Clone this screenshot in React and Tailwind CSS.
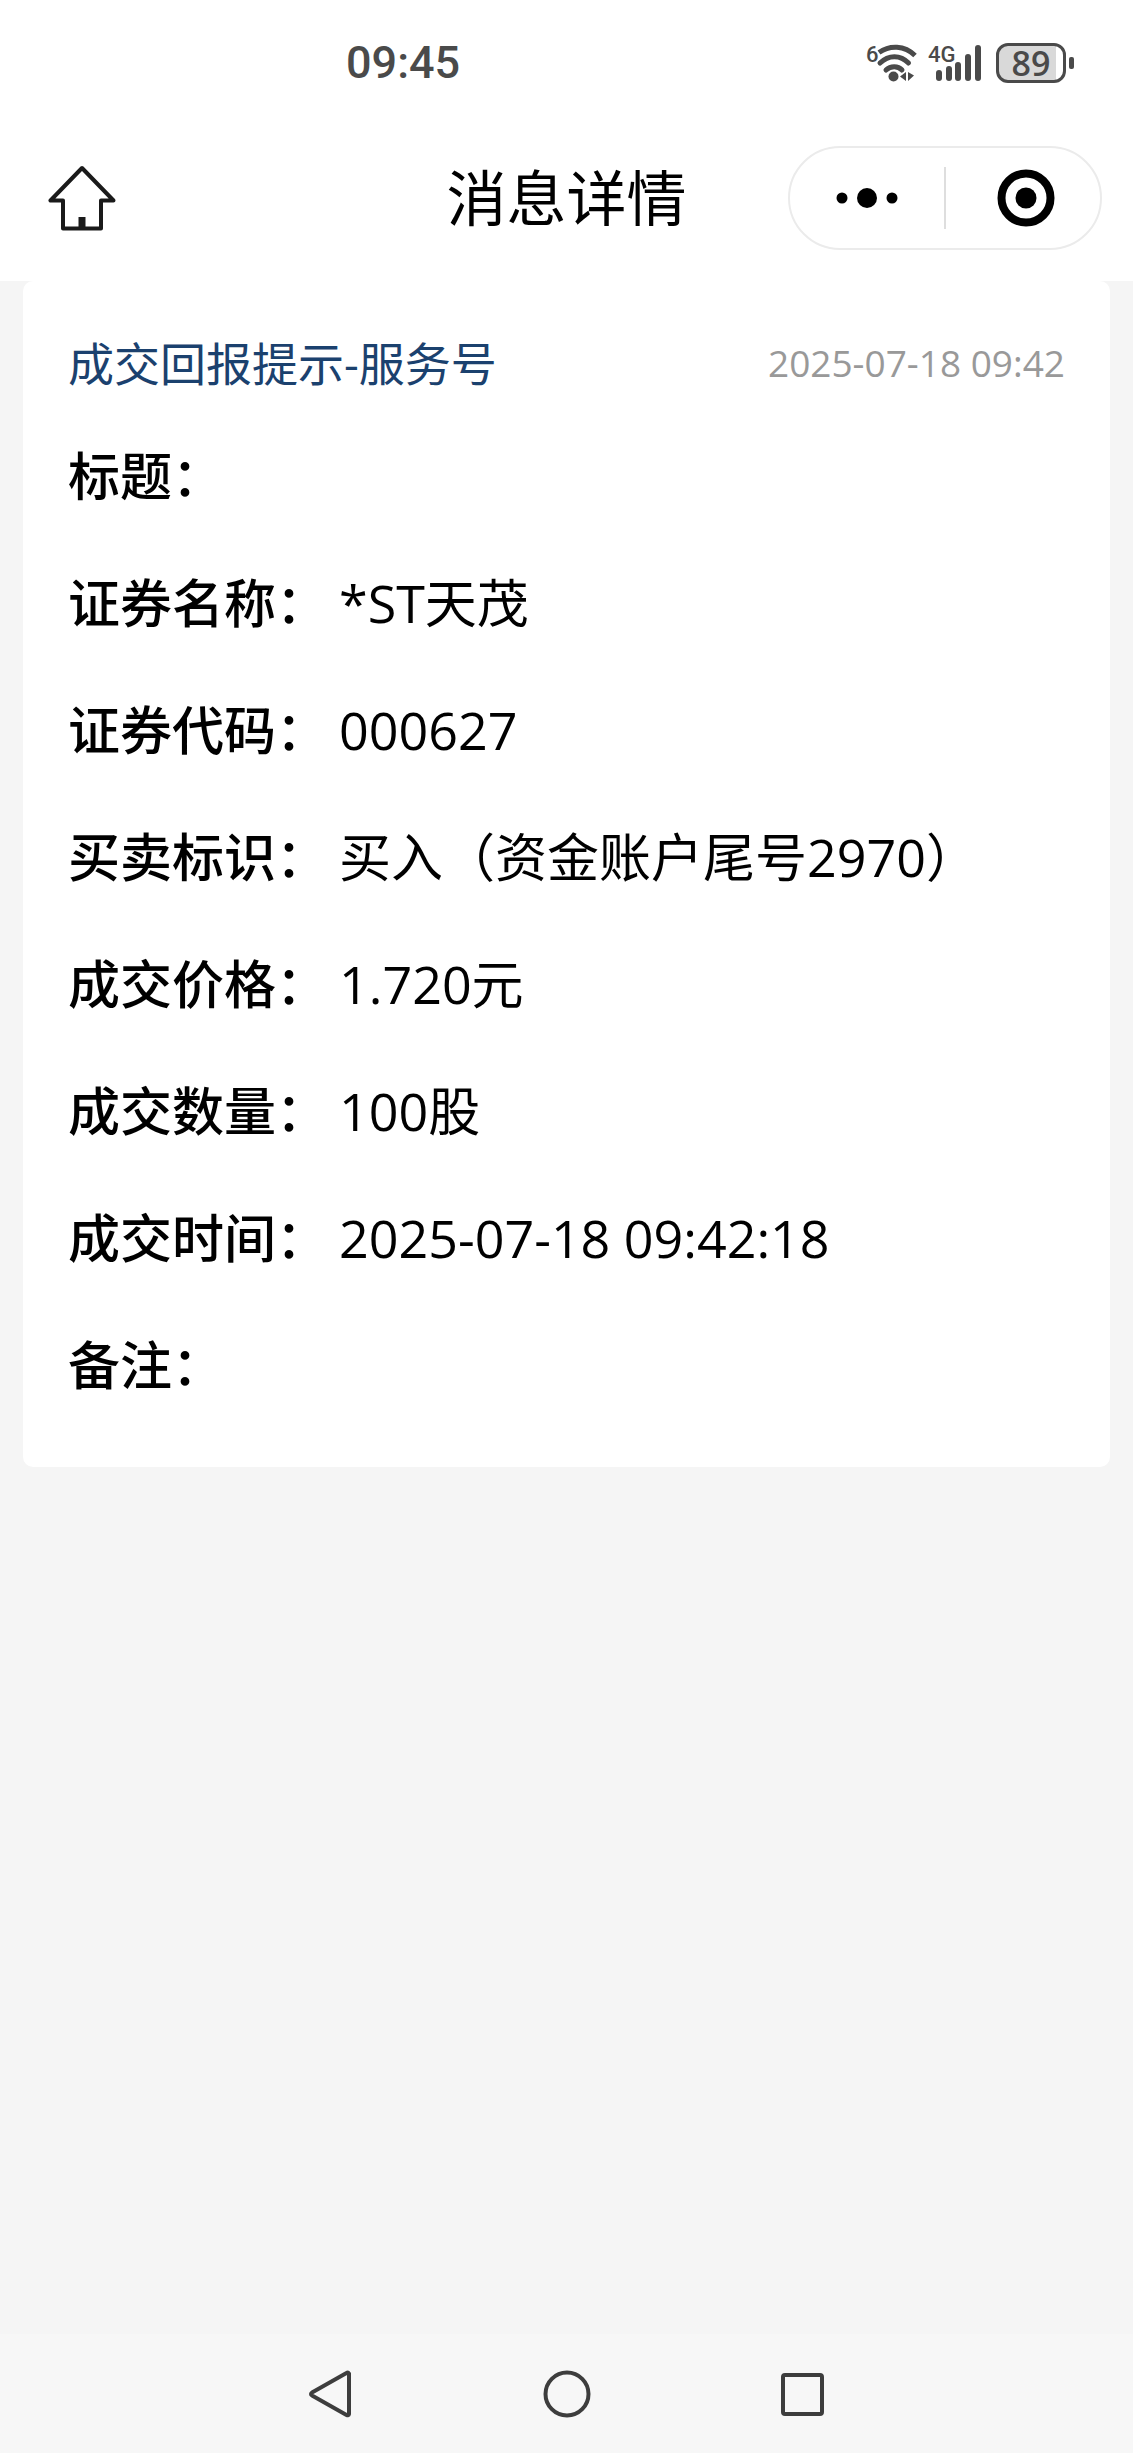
const rows = [
  { label: "标题" },
  { label: "证券名称", value: "*ST天茂" },
  { label: "证券代码", value: "000627" },
  { label: "买卖标识", value: "买入（资金账户尾号2970）" },
  { label: "成交价格", value: "1.720元" },
  { label: "成交数量", value: "100股" },
  { label: "成交时间", value: "2025-07-18 09:42:18" },
  { label: "备注" },
];

function WifiIcon() {
  return (
    <svg className="overflow-visible" width="52" height="40" viewBox="0 0 52 40" fill="none" stroke="#4a4a4a" strokeWidth="5">
      <text x="0" y="19" fill="#4a4a4a" stroke="none" fontSize="22" fontWeight="500" fontFamily="Roboto, sans-serif">6</text>
      <path d="M13 9.500C23.500 2 38.500 2 49 12.500" />
      <path strokeLinecap="round" d="M14 20C22.500 11.500 34.500 11.500 42.500 20" />
      <path strokeLinecap="round" d="M20 27C24.500 22.500 32 22.500 36 27" />
      <circle cx="27.500" cy="33.500" r="5" fill="#4a4a4a" stroke="none" />
      <path d="M40 29v9l-6-4.500zM42 29v9l6-5.500z" fill="#4a4a4a" stroke="none" />
    </svg>
  );
}

function SignalIcon() {
  return (
    <svg className="overflow-visible" width="54" height="40" viewBox="0 0 54 40" fill="#4a4a4a">
      <text x="0" y="19" fontSize="22" fontWeight="500" fontFamily="Roboto, sans-serif">4G</text>
      <rect x="8" y="27" width="6" height="11" rx="3" />
      <rect x="18" y="23" width="6" height="15" rx="3" />
      <rect x="27" y="19" width="6" height="19" rx="3" />
      <rect x="37" y="11" width="6" height="27" rx="3" />
      <rect x="47" y="2" width="6" height="36" rx="3" />
    </svg>
  );
}

function StatusBar() {
  return (
    <div className="flex h-[126px] items-center justify-between pl-[346px] pr-[59px] text-[#4a4a4a]">
      <span className="font-['Roboto',sans-serif] text-[45px] font-medium leading-[60px]">09:45</span>
      <div className="flex items-center">
        <WifiIcon />
        <span className="ml-[10px]"><SignalIcon /></span>
        <div className="ml-[14px] flex items-center gap-[3px]">
          <div className="flex h-[40px] w-[70px] items-center justify-center rounded-[12px] border-[3px] border-[#4a4a4a] bg-[linear-gradient(to_right,#d9d9d9_89%,#fff_89%)] text-[34px] font-semibold leading-none">
            89
          </div>
          <span className="h-[12px] w-[5px] rounded-[2px] bg-[#4a4a4a]" />
        </div>
      </div>
    </div>
  );
}

function TitleBar() {
  return (
    <header className="grid h-[155px] grid-cols-[1fr_auto_1fr] items-center px-[31px] pb-[11px]">
      <button type="button" aria-label="首页" className="justify-self-start pl-[17px]">
        <svg width="68" height="66" viewBox="0 0 68 66" fill="none" stroke="#1a1a1a" strokeWidth="4" strokeLinejoin="round">
          <path d="M34 3L2.500 35.500H15V63.500H53V35.500H65.500Z" />
          <path d="M34 52v11" strokeWidth="7" />
        </svg>
      </button>
      <h1 className="text-[60px] leading-[80px]">消息详情</h1>
      <div className="flex h-[104px] w-[314px] items-center justify-self-end rounded-full border-2 border-[#ebebeb]">
        <button type="button" aria-label="更多" className="flex w-[154px] justify-center">
          <svg width="62" height="20" viewBox="0 0 62 20">
            <circle cx="6" cy="10" r="5.500" />
            <circle cx="31" cy="10" r="10" />
            <circle cx="56" cy="10" r="5.500" />
          </svg>
        </button>
        <span className="h-[62px] w-[2px] bg-[#dedede]" />
        <button type="button" aria-label="关闭" className="flex flex-1 justify-center pl-[6px]">
          <svg width="58" height="58" viewBox="0 0 58 58">
            <circle cx="29" cy="29" r="24.500" fill="none" stroke="#000" strokeWidth="8" />
            <circle cx="29" cy="29" r="10.500" />
          </svg>
        </button>
      </div>
    </header>
  );
}

function NavBar() {
  return (
    <nav className="flex h-[119px] items-center justify-center gap-[188px] bg-[#f7f7f7]">
      <button type="button" aria-label="返回">
        <svg width="48" height="48" viewBox="0 0 48 48" fill="none" stroke="#3d3d3d" strokeWidth="4" strokeLinejoin="round">
          <path d="M42 3.500Q41 2 39.500 3L5 22.500Q3 24 5 25.500L39.500 45Q41.500 46 42 44Z" />
        </svg>
      </button>
      <button type="button" aria-label="主屏幕">
        <svg width="48" height="48" viewBox="0 0 48 48" fill="none" stroke="#3d3d3d" strokeWidth="4">
          <circle cx="24" cy="24" r="21.500" />
        </svg>
      </button>
      <button type="button" aria-label="最近任务">
        <svg width="48" height="48" viewBox="0 0 48 48" fill="none" stroke="#3d3d3d" strokeWidth="4">
          <rect x="4" y="5" width="39" height="39" rx="2" />
        </svg>
      </button>
    </nav>
  );
}

export default function App() {
  return (
    <div lang="zh-CN" className="flex min-h-screen flex-col bg-[#f5f5f5] font-['Open_Sans','Noto_Sans_CJK_SC',sans-serif] text-black">
      <div className="bg-white">
        <StatusBar />
        <TitleBar />
      </div>

      <main className="flex-1">
        <section className="mx-[23px] rounded-[10px] bg-white px-[45px] pb-[39px] pt-[52px]">
          <div className="mb-[19px] flex items-center justify-between leading-[60px]">
            <h2 className="text-[46px] text-[#1b416e]">成交回报提示-服务号</h2>
            <time className="text-[37px] text-[#999]">2025-07-18 09:42</time>
          </div>
          <dl className="text-[52px] leading-[127px]">
            {rows.map((row) => (
              <div key={row.label} className="flex gap-[11px]">
                <dt className="font-medium">{row.label}：</dt>
                {row.value && <dd>{row.value}</dd>}
              </div>
            ))}
          </dl>
        </section>
      </main>

      <NavBar />
    </div>
  );
}
